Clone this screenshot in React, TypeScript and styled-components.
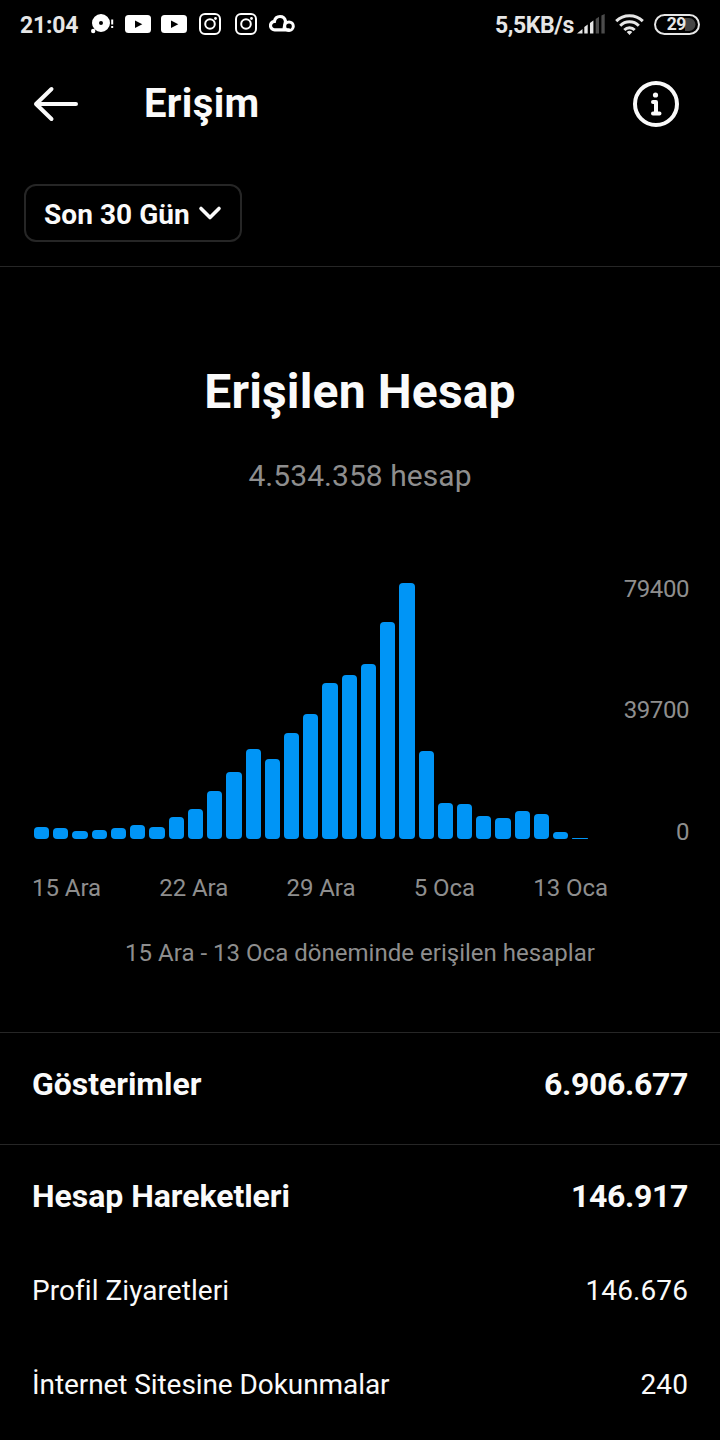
import React from "react";
import styled, { createGlobalStyle } from "styled-components";

const GlobalStyle = createGlobalStyle`
  * { box-sizing: border-box; }
  body { margin: 0; background: #000; }
`;

const Screen = styled.main`
  width: 720px;
  height: 1440px;
  overflow: hidden;
  display: flex;
  flex-direction: column;
  background: #000;
  color: #fafafa;
  font-family: Roboto, "Noto Sans", sans-serif;
  font-variant-ligatures: none;
`;

const StatusBar = styled.div`
  height: 48px;
  flex: none;
  display: flex;
  justify-content: space-between;
  align-items: center;
  padding: 0 20px;
  color: #e6e6e6;
`;

const StatusGroup = styled.div<{ $gap: number }>`
  display: flex;
  align-items: center;
  gap: ${(p) => p.$gap}px;
`;

const NotificationIcons = styled(StatusGroup)`
  margin-left: 1px;
`;

const IconSlot = styled.span`
  width: 26px;
  display: flex;
  justify-content: center;
`;

const StatusText = styled.span<{ $width: number; $tracking: number }>`
  width: ${(p) => p.$width}px;
  font-size: 23px;
  font-weight: 700;
  line-height: 44px;
  padding-top: 4px;
  letter-spacing: ${(p) => p.$tracking}px;
  white-space: nowrap;
`;

const Header = styled.header`
  height: 112px;
  flex: none;
  display: flex;
  align-items: center;
  padding: 0 40px 0 32px;
`;

const Title = styled.h1`
  margin: 0 auto 0 64px;
  font-size: 40px;
  line-height: 48px;
  font-weight: 700;
  letter-spacing: 0.35px;
`;

const FilterBar = styled.div`
  height: 107px;
  flex: none;
  padding: 24px;
  border-bottom: 1px solid #262626;
`;

const FilterButton = styled.button`
  width: 218px;
  height: 58px;
  display: flex;
  align-items: center;
  justify-content: space-between;
  padding: 0 18px;
  border: 2px solid #262626;
  border-radius: 12px;
  background: transparent;
  color: inherit;
  font: 700 28px/52px Roboto, sans-serif;
  white-space: nowrap;
`;

const FilterLabel = styled.span`
  padding-top: 3px;
  letter-spacing: 0.05px;
`;

const Reach = styled.section`
  height: 766px;
  flex: none;
  display: flex;
  flex-direction: column;
  align-items: center;
  padding-top: 97px;
  border-bottom: 1px solid #262626;
`;

const Heading = styled.h2`
  margin: 0;
  font-size: 48px;
  line-height: 56px;
  font-weight: 700;
  letter-spacing: 0.15px;
`;

const Total = styled.p`
  margin: 38px 0 0;
  font-size: 30px;
  line-height: 36px;
  letter-spacing: 0.05px;
  color: #8e8e8e;
`;

const Chart = styled.div`
  width: 100%;
  height: 264px;
  margin-top: 81px;
  padding: 0 31px 0 34px;
  display: flex;
  justify-content: space-between;
`;

const Bars = styled.div`
  height: 264px;
  display: flex;
  align-items: flex-end;
  gap: 4px;
`;

const Bar = styled.div<{ $wide: boolean }>`
  width: ${(p) => (p.$wide ? 16 : 15)}px;
  border-radius: 4px;
  background: #0095f6;
`;

const ValueAxis = styled.div`
  display: flex;
  flex-direction: column;
  align-items: flex-end;
  gap: 93px;
  color: #8e8e8e;
  font-size: 24px;
  line-height: 28px;
  letter-spacing: -0.45px;
  span:last-child { margin-top: 1px; }
`;

const DateAxis = styled.div`
  width: 100%;
  display: flex;
  justify-content: space-between;
  margin-top: 35px;
  padding: 0 112px 0 32px;
  color: #8e8e8e;
  font-size: 24px;
  line-height: 28px;
  letter-spacing: -0.05px;
`;

const Caption = styled.p`
  margin: 37px 0 0;
  font-size: 24px;
  line-height: 28px;
  letter-spacing: 0.02px;
  color: #8e8e8e;
`;

const Group = styled.section`
  flex: none;
  border-bottom: 1px solid #262626;
  &:last-child { border: 0; }
`;

const Row = styled.div<{ $main?: boolean; $tracking?: number }>`
  height: ${(p) => (p.$main ? 103 : 94)}px;
  display: flex;
  justify-content: space-between;
  padding: 0 32px;
  font-size: ${(p) => (p.$main ? 32 : 28)}px;
  font-weight: ${(p) => (p.$main ? 700 : 400)};
  line-height: ${(p) => (p.$main ? 103 : 86)}px;
  letter-spacing: ${(p) => p.$tracking ?? -0.04}px;
`;

const Value = styled.span<{ $main?: boolean }>`
  letter-spacing: ${(p) => (p.$main ? -0.35 : 0.1)}px;
`;

const Impressions = styled(Group)`
  height: 112px;
`;

const bars = [
  12, 11, 8, 9, 11, 14, 12, 22, 30, 48, 67, 90, 80, 106, 125, 156, 164, 175,
  217, 256, 88, 36, 35, 23, 21, 28, 25, 7, 1,
];
const wideBars = [2, 6, 10, 15, 19, 24, 28];
const dates = ["15 Ara", "22 Ara", "29 Ara", "5 Oca", "13 Oca"];

const DiscIcon = () => (
  <svg width="24" height="24" viewBox="0 0 24 24" fill="#fff">
    <path fillRule="evenodd" d="M10 2a9 9 0 1 1 0 18 9 9 0 0 1 0-18Zm0 7a2 2 0 1 0 0 4 2 2 0 0 0 0-4Z" />
    <circle cx="2.2" cy="19" r="2.2" />
    <path d="M20.2 7.5h2v5h-2zM20.2 14h2v2h-2z" />
  </svg>
);

const VideoIcon = () => (
  <svg width="26" height="18" viewBox="0 0 26 18">
    <rect width="26" height="18" rx="3.5" fill="#fff" />
    <path d="m10 5.5 7.3 3.7-7.3 3.8Z" fill="#000" />
  </svg>
);

const CameraIcon = () => (
  <svg width="22" height="22" viewBox="0 0 22 22" fill="none" stroke="#fff" strokeWidth="2">
    <rect x="1" y="1" width="20" height="20" rx="5" />
    <circle cx="11" cy="11" r="4.8" />
    <circle cx="16.5" cy="5.5" r="1.4" fill="#fff" stroke="none" />
  </svg>
);

const CloudIcon = () => (
  <svg width="26" height="20" viewBox="0 0 26 20" fill="none" stroke="#fff">
    <path d="M20 15.8H6a4.2 4.2 0 0 1-.6-8.4C6 4.2 8 2.5 11 2.5c2.9 0 4.9 1.8 5.4 4.4" strokeWidth="3.2" strokeLinecap="round" />
    <path d="M16 7.5 14.5 15" strokeWidth="2.2" />
    <circle cx="20" cy="12.2" r="4.3" strokeWidth="3" />
  </svg>
);

const SignalIcon = () => (
  <svg width="28" height="20" viewBox="0 0 28 20" fill="#e6e6e6">
    <path d="m0 19.5 5.5-4.5v4.5ZM7.3 13l3.4-2.4v8.9H7.3ZM13 9l3.4-2.4v12.9H13Z" />
    <path d="m18.7 5 3.3-2.2v16.7h-3.3ZM24.4 1.5 27.7 0v19.5h-3.3Z" fill="#4c4c4c" />
  </svg>
);

const WifiIcon = () => (
  <svg width="29" height="21" viewBox="0 0 29 21" fill="none" stroke="#e6e6e6" strokeWidth="3">
    <path d="M1.2 7.2a19.2 19.2 0 0 1 26.6 0M5.2 11.7a13.2 13.2 0 0 1 18.6 0M9.3 16a7.4 7.4 0 0 1 10.4 0" />
    <path d="m11.7 18 2.8 2.9 2.8-2.9a4.2 4.2 0 0 0-5.6 0Z" fill="#e6e6e6" stroke="none" />
  </svg>
);

const BatteryIcon = () => (
  <svg width="46" height="21" viewBox="0 0 46 21">
    <rect x="1" y="1" width="44" height="19" rx="9.5" fill="none" stroke="#e6e6e6" strokeWidth="2" />
    <path d="M31 4h4a6.5 6.5 0 0 1 0 13h-4Z" fill="#444" />
    <text x="22.3" y="16.2" fill="#e6e6e6" fontFamily="Roboto, sans-serif" fontSize="17.5" fontWeight="700" letterSpacing="-0.6" textAnchor="middle">29</text>
  </svg>
);

const BackIcon = () => (
  <svg width="48" height="40" viewBox="0 0 48 40" fill="none" stroke="#fafafa" strokeWidth="4" strokeLinecap="round" strokeLinejoin="round">
    <path d="M44 20H4M19.5 5 4 20l15.5 15" />
  </svg>
);

const InfoIcon = () => (
  <svg width="48" height="48" viewBox="0 0 48 48" fill="none" stroke="#fafafa" strokeLinecap="round" strokeLinejoin="round">
    <circle cx="24" cy="24" r="21" strokeWidth="4" />
    <circle cx="23.5" cy="15" r="2.6" fill="#fafafa" stroke="none" />
    <path d="M21 22h3v11M21 33.5h6.5" strokeWidth="4" />
  </svg>
);

const ChevronIcon = () => (
  <svg width="24" height="16" viewBox="0 0 24 16" fill="none" stroke="#fafafa" strokeWidth="3.6" strokeLinecap="round" strokeLinejoin="round">
    <path d="m3 3.5 9 9 9-9" />
  </svg>
);

export default function App() {
  return (
    <Screen>
      <GlobalStyle />
      <StatusBar>
        <StatusGroup $gap={10}>
          <StatusText $width={60} $tracking={-0.2}>21:04</StatusText>
          <NotificationIcons $gap={10}>
            <DiscIcon />
            <IconSlot><VideoIcon /></IconSlot>
            <IconSlot><VideoIcon /></IconSlot>
            <IconSlot><CameraIcon /></IconSlot>
            <IconSlot><CameraIcon /></IconSlot>
            <IconSlot><CloudIcon /></IconSlot>
          </NotificationIcons>
        </StatusGroup>
        <StatusGroup $gap={10}>
          <StatusGroup $gap={3}>
            <StatusText $width={79} $tracking={-0.4}>5,5KB/s</StatusText>
            <SignalIcon />
          </StatusGroup>
          <WifiIcon />
          <BatteryIcon />
        </StatusGroup>
      </StatusBar>
      <Header>
        <BackIcon />
        <Title>Erişim</Title>
        <InfoIcon />
      </Header>
      <FilterBar>
        <FilterButton>
          <FilterLabel>Son 30 Gün</FilterLabel>
          <ChevronIcon />
        </FilterButton>
      </FilterBar>
      <Reach>
        <Heading>Erişilen Hesap</Heading>
        <Total>4.534.358 hesap</Total>
        <Chart>
          <Bars>
            {bars.map((height, i) => (
              <Bar key={i} $wide={wideBars.includes(i)} style={{ height }} />
            ))}
          </Bars>
          <ValueAxis>
            <span>79400</span>
            <span>39700</span>
            <span>0</span>
          </ValueAxis>
        </Chart>
        <DateAxis>
          {dates.map((date) => (
            <span key={date}>{date}</span>
          ))}
        </DateAxis>
        <Caption>15 Ara - 13 Oca döneminde erişilen hesaplar</Caption>
      </Reach>
      <Impressions>
        <Row $main>
          <span>Gösterimler</span>
          <Value $main>6.906.677</Value>
        </Row>
      </Impressions>
      <Group>
        <Row $main>
          <span>Hesap Hareketleri</span>
          <Value $main>146.917</Value>
        </Row>
        <Row $tracking={0.05}>
          <span>Profil Ziyaretleri</span>
          <Value>146.676</Value>
        </Row>
        <Row $tracking={-0.08}>
          <span>İnternet Sitesine Dokunmalar</span>
          <Value>240</Value>
        </Row>
      </Group>
    </Screen>
  );
}
